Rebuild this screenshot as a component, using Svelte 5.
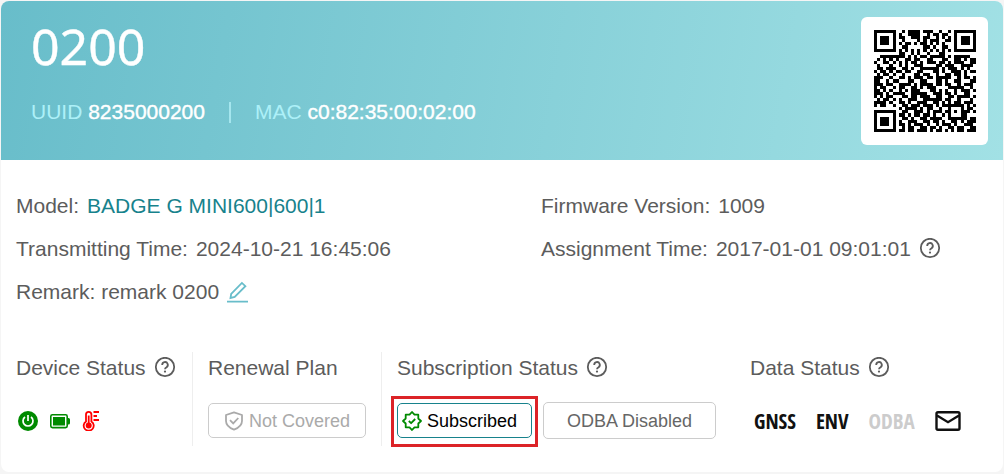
<script lang="ts">
	const device = {
		name: "0200",
		uuid: "8235000200",
		mac: "c0:82:35:00:02:00",
		model: "BADGE G MINI600|600|1",
		firmware: "1009",
		transmitting: "2024-10-21 16:45:06",
		assignment: "2017-01-01 09:01:01",
		remark: "remark 0200",
	};

	const qr = [
		"#######..#.####.###..#..#.#######",
		"#.....#.#..####..#.##.##..#.....#",
		"#.###.#.##..###.##..#.#.#.#.###.#",
		"#.###.#..#....#.#.###..##.#.###.#",
		"#.###.#.#.##.#.##.#.#.#...#.###.#",
		"#.....#..##.....##.#..##..#.....#",
		"#######.#.#.#.#.#.#.#.#.#.#######",
		"........##..#.#..#...##..........",
		"..########.#.#.##.#####.#.#####..",
		".#.#.#.#..##.##..##...##..##.#.##",
		"#..##.#.#.#.##.#.###.##.#.###..##",
		".#...#..#.#..###....##.###..####.",
		".##.###..##.#..######.#.###.#.#..",
		"#.##.#.##.##..##...##.#..###.#.##",
		".#.##.#..#...##.##..#..##.##.#...",
		"###..#..##.#.###.##.#####..#.##.#",
		"##..#.##...##..##...##.#..##...##",
		"###.##..####.#.####.##.##..#.###.",
		"#.##..#.##..##.#.###....#####..#.",
		"##.#.#..#.#.###...##.#.#..#.###.#",
		"###.#.####..#####..###.##.#..##..",
		"#.#.##...##.##.###..##..##.####.#",
		".#.##.#.#..###..######.##..#...#.",
		"####.#..##.#..###..##.#.#.##.###.",
		"#.##..#..##.###.###.#.#######.#.#",
		"........#.####.#.##..#..#...#.##.",
		"#######..##..###.#.###.##.#.###.#",
		"#.....#.##.#.##.##.#..#.#...##...",
		"#.###.#..##.#..##.####..######.##",
		"#.###.#.#..###..##.##.#..##.#.###",
		"#.###.#.##.#.###.#..#.###.#..###.",
		"#.....#..#.##..##.##.#..##.##..##",
		"#######.##.##.###.#.##.#.#.##.###",
	];
	const qrPath = qr
		.map((row, y) => [...row].map((cell, x) => (cell === "#" ? `M${x} ${y}h1v1h-1z` : "")).join(""))
		.join("");
</script>

{#snippet help(label: string)}
	<button class="icon-button" type="button" aria-label={label}>
		<svg width="22" height="22" viewBox="0 0 22 22" fill="none" stroke="currentColor" stroke-width="1.8">
			<circle cx="11" cy="10" r="9.2" />
			<path d="M8.2 8a2.8 2.8 0 1 1 4.3 2.2c-1 .6-1.5 1-1.5 2.1" />
			<circle cx="11" cy="14.6" r="1.1" fill="currentColor" stroke="none" />
		</svg>
	</button>
{/snippet}

<article class="card">
	<header>
		<div>
			<h1>{device.name}</h1>
			<p class="ids">
				<span>UUID <b>{device.uuid}</b></span>
				<i class="bar"></i>
				<span>MAC <b>{device.mac}</b></span>
			</p>
		</div>
		<svg class="qr" viewBox="0 0 33 33" role="img" aria-label="QR code" shape-rendering="crispEdges">
			<path d={qrPath} />
		</svg>
	</header>

	<section class="info">
		<p>Model: <a href="#model">{device.model}</a></p>
		<p>Firmware Version: <span>{device.firmware}</span></p>
		<p>Transmitting Time: <span>{device.transmitting}</span></p>
		<p>Assignment Time: <span>{device.assignment}</span> {@render help("About assignment time")}</p>
		<p>
			Remark: {device.remark}
			<button class="icon-button edit" type="button" aria-label="Edit remark">
				<svg width="22" height="22" viewBox="0 0 22 22" fill="none" stroke="currentColor" stroke-width="1.8">
					<path d="M4.2 12.8 14.9 1.9l3.5 3.3L7.7 16l-4.2 1zM0 20.6h21" />
				</svg>
			</button>
		</p>
	</section>

	<section class="statuses">
		<div class="status">
			<h2>Device Status {@render help("About device status")}</h2>
			<div class="row icons">
				<svg width="20" height="20" viewBox="0 0 20 20" role="img" aria-label="Power on">
					<circle cx="10" cy="10" r="10" fill="#008a00" />
					<path d="M7 6a5 5 0 1 0 6 0M10 4v6" fill="none" stroke="#fff" stroke-width="1.7" />
				</svg>
				<svg width="20" height="20" viewBox="0 0 20 20" role="img" aria-label="Battery full">
					<rect x=".8" y="3.8" width="16.4" height="12.8" rx="1.6" fill="none" stroke="#008a00" stroke-width="1.6" />
					<path d="M3 6h12v8.4H3zM17 7h1.5Q20 7 20 8.5V12q0 1.500-1.500 1.500H17z" fill="#008a00" />
				</svg>
				<svg width="20" height="20" viewBox="0 0 20 20" fill="none" stroke="#f00" stroke-width="1.8" role="img" aria-label="High temperature">
					<path d="M4 10.5V3.6a2.7 2.7 0 0 1 5.4 0v6.900a5 5 0 1 1-5.4 0z" />
					<circle cx="6.7" cy="14.4" r="3" fill="#f00" stroke="none" />
					<path d="M6.7 4.5V14M11.5 1H17M11.5 5H15M11.5 9H17" />
				</svg>
			</div>
		</div>

		<div class="status">
			<h2>Renewal Plan</h2>
			<div class="row">
				<button class="tag muted" type="button">
					<svg width="20" height="20" viewBox="0 0 20 20" fill="none" stroke="currentColor" stroke-width="1.8">
						<path d="M10 1.3 18 4v6c0 4-3.2 6.8-8 8.700C5.200 16.800 2 14 2 10V4z" stroke-linejoin="round" />
						<path d="m6 9.2 3.2 3.2L14.3 7" />
					</svg>
					Not Covered
				</button>
			</div>
		</div>

		<div class="status">
			<h2>Subscription Status {@render help("About subscription status")}</h2>
			<div class="row">
				<button class="tag active" type="button">
					<svg width="20" height="20" viewBox="0 0 20 20" fill="none" stroke="#008a00" stroke-width="1.8" stroke-linejoin="round">
						<path d="m10 1 2.5 2.700h3.800v3.800L19 10l-2.700 2.500v3.800h-3.800L10 19l-2.500-2.700H3.700v-3.800L1 10l2.700-2.500V3.700h3.800z" />
						<path d="m6.8 10 2.3 2.2 4.1-4.2" />
					</svg>
					Subscribed
				</button>
				<button class="tag odba" type="button">ODBA Disabled</button>
			</div>
		</div>

		<div class="status">
			<h2>Data Status {@render help("About data status")}</h2>
			<div class="row data">
				<b>GNSS</b>
				<b>ENV</b>
				<b class="off">ODBA</b>
				<svg width="26" height="22" viewBox="0 0 26 22" fill="none" stroke="#111" stroke-width="2.4" role="img" aria-label="Messages">
					<rect x="1.5" y="2.2" width="23" height="17.6" rx="1.5" />
					<path d="m2 5.5 11 6.7 11-6.7" />
				</svg>
			</div>
		</div>
	</section>
</article>

<style>
	:global(body) {
		margin: 0;
		background: #f5f5f5;
	}

	.card {
		box-sizing: border-box;
		margin: 1px;
		border-radius: 8px;
		background: #fff;
		overflow: hidden;
		color: #5c5c5c;
		font: 21px/24px "Liberation Sans", Arial, sans-serif;
	}

	h1,
	h2,
	p {
		margin: 0;
		font-weight: normal;
	}

	header {
		display: flex;
		justify-content: space-between;
		padding: 16px 15px 15px 30px;
		background: linear-gradient(100deg, #68bdca, #a2e1e5);
		color: #fff;
	}

	h1 {
		font: 50px/58px "Noto Sans", "Open Sans", sans-serif;
		-webkit-text-stroke: 0.4px #fff;
	}

	.ids {
		display: flex;
		align-items: center;
		margin-top: 25px;
		color: #adf0f8;
	}

	.ids b {
		color: #fff;
		font-weight: normal;
		-webkit-text-stroke: 0.4px #fff;
	}

	.bar {
		width: 2px;
		height: 21px;
		margin: 0 24px;
		background: #a5e6ee;
	}

	.qr {
		width: 102px;
		height: 102px;
		padding: 13px 12px 13px 13px;
		border-radius: 6px;
		background: #fff;
		fill: #000;
	}

	.info {
		display: grid;
		grid-template-columns: 525fr 462fr;
		row-gap: 19px;
		padding: 34px 0 0 15px;
	}

	.info p {
		display: flex;
		align-items: center;
		gap: 8px;
	}

	a {
		color: #17828c;
		text-decoration: none;
	}

	.icon-button {
		display: flex;
		padding: 0;
		border: 0;
		background: none;
		color: inherit;
		cursor: pointer;
	}

	.edit {
		color: #68bdca;
	}

	.statuses {
		display: grid;
		grid-template-columns: 191fr 189fr 354fr 268fr;
		padding: 48px 0 26px;
	}

	.status {
		padding: 4px 0 7px 15px;
	}

	.status:nth-child(2),
	.status:nth-child(3) {
		border-left: 1px solid #eee;
	}

	h2 {
		display: flex;
		align-items: center;
		gap: 8px;
		font-size: 21px;
		line-height: 24px;
	}

	.row {
		display: flex;
		align-items: center;
		gap: 11px;
		height: 37px;
		margin-top: 22px;
	}

	.icons {
		gap: 12px;
		padding-left: 2px;
	}

	.tag {
		position: relative;
		display: flex;
		align-items: center;
		justify-content: center;
		box-sizing: border-box;
		gap: 5px;
		height: 35px;
		padding: 0 15px;
		border: 1px solid #ccc;
		border-radius: 5px;
		background: #fff;
		color: #666;
		font: 18px/24px "Liberation Sans", Arial, sans-serif;
		white-space: nowrap;
		cursor: pointer;
	}

	.muted {
		color: #aaa;
	}

	.active {
		padding: 0 14px 0 4px;
		border-color: #17828c;
		color: #000;
	}

	.active::after {
		content: "";
		position: absolute;
		inset: -8px -7px -10px;
		border: 3px solid #dc2328;
	}

	.odba {
		height: 37px;
		padding: 0 23px;
	}

	.data {
		gap: 20px;
		padding-left: 4px;
		color: #111;
		font: bold 21px/24px "Open Sans Condensed", "Noto Sans Condensed", "Roboto Condensed", "Liberation Sans Narrow", "Liberation Sans", sans-serif;
	}

	.off {
		color: #ccc;
	}
</style>
